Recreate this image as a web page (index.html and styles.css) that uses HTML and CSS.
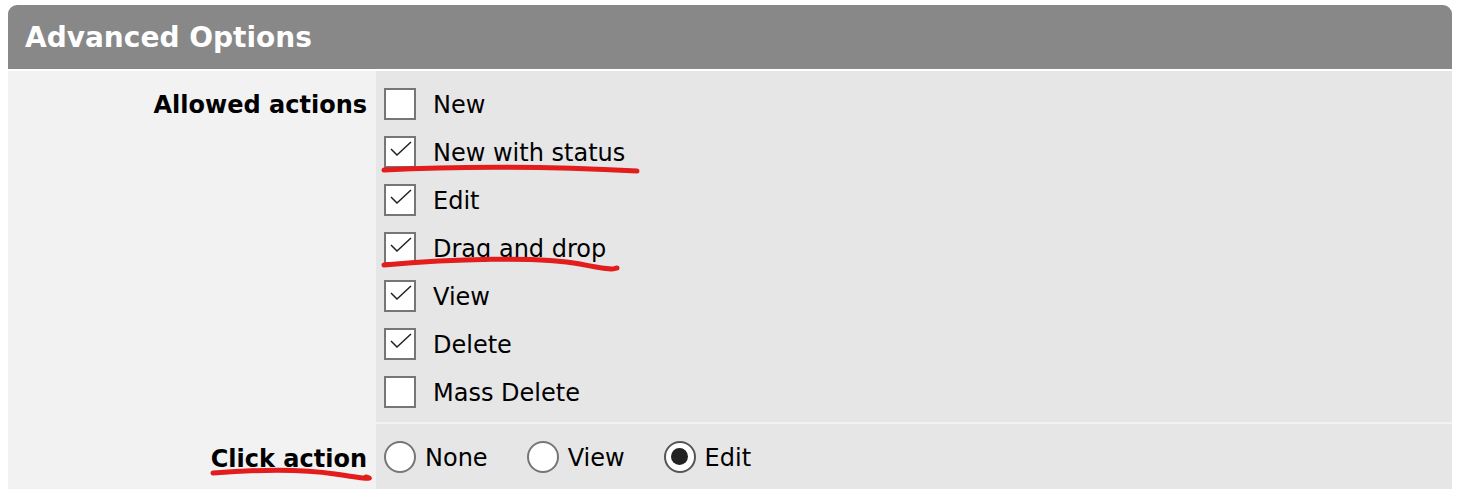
FILE: index.html
```html
<!DOCTYPE html>
<html lang="en">
<head>
<meta charset="utf-8">
<title>Advanced Options</title>
<link rel="stylesheet" href="styles.css">
</head>
<body>
<div class="panel">
  <div class="panel-header">Advanced Options</div>
  <div class="form">
    <div class="label label-top">Allowed actions</div>
    <div class="value checks">
      <div class="check"><span class="box"></span><span class="text">New</span></div>
      <div class="check"><span class="box"><svg viewBox="0 0 28 28" class="tick"><path d="M5 11 L11 17 L25 4"/></svg></span><span class="text">New with status</span></div>
      <div class="check"><span class="box"><svg viewBox="0 0 28 28" class="tick"><path d="M5 11 L11 17 L25 4"/></svg></span><span class="text">Edit</span></div>
      <div class="check"><span class="box"><svg viewBox="0 0 28 28" class="tick"><path d="M5 11 L11 17 L25 4"/></svg></span><span class="text">Drag and drop</span></div>
      <div class="check"><span class="box"><svg viewBox="0 0 28 28" class="tick"><path d="M5 11 L11 17 L25 4"/></svg></span><span class="text">View</span></div>
      <div class="check"><span class="box"><svg viewBox="0 0 28 28" class="tick"><path d="M5 11 L11 17 L25 4"/></svg></span><span class="text">Delete</span></div>
      <div class="check"><span class="box"></span><span class="text">Mass Delete</span></div>
    </div>
    <div class="label label-mid">Click action</div>
    <div class="value radios">
      <div class="radio"><span class="circle"></span><span class="text">None</span></div>
      <div class="radio"><span class="circle"></span><span class="text">View</span></div>
      <div class="radio"><span class="circle on"><span class="dot"></span></span><span class="text">Edit</span></div>
    </div>
  </div>
</div>
<svg class="marks" width="1458" height="490" viewBox="0 0 1458 490">
  <path d="M384 170 Q 500 164 637 171"/>
  <path d="M384 265 C 450 259, 540 256, 580 264 S 612 268 617 268"/>
  <path d="M213 473 Q 290 467 335 474 T 366 477"/>
</svg>
</body>
</html>
```
FILE: styles.css
```css
html, body {
  margin: 0;
  padding: 0;
  background: #ffffff;
}
body {
  padding: 5px 6px 0 8px;
  font-family: "DejaVu Sans", Verdana, sans-serif;
  color: #000;
  position: relative;
}
.panel {
  width: 1444px;
}
.panel-header {
  height: 64px;
  background: #888888;
  border-radius: 9px 9px 0 0;
  color: #fff;
  font-weight: bold;
  font-size: 28px;
  line-height: 66px;
  padding-left: 17px;
  margin-bottom: 2px;
}
.form {
  display: grid;
  grid-template-columns: 368px 1fr;
  row-gap: 2px;
  background: #f2f2f2;
}
.label {
  font-weight: bold;
  font-size: 24px;
  text-align: right;
  padding-right: 9px;
}
.label-top {
  padding-top: 10px;
  line-height: 48px;
}
.label-mid {
  align-self: center;
  line-height: 48px;
  padding-top: 5px;
}
.value {
  background: #e6e6e6;
  font-size: 24px;
}
.checks {
  padding: 9px 0 6px 8px;
}
.check {
  display: flex;
  align-items: center;
  height: 48px;
}
.box {
  width: 32px;
  height: 32px;
  box-sizing: border-box;
  border: 2px solid #767676;
  background: #fff;
  display: flex;
  align-items: center;
  justify-content: center;
}
.tick {
  width: 28px;
  height: 28px;
  fill: none;
  stroke: #222;
  stroke-width: 1.5;
}
.check .text {
  margin-left: 17px;
  padding-top: 2px;
}
.radios {
  height: 65px;
  display: flex;
  align-items: center;
  padding-left: 8px;
  gap: 39px;
}
.radio {
  display: flex;
  align-items: center;
}
.circle {
  width: 32px;
  height: 32px;
  box-sizing: border-box;
  border: 2px solid #767676;
  border-radius: 50%;
  background: #fff;
  display: flex;
  align-items: center;
  justify-content: center;
}
.circle.on {
  border-color: #555;
}
.dot {
  width: 17px;
  height: 17px;
  border-radius: 50%;
  background: #222;
}
.radio .text {
  margin-left: 9px;
  padding-top: 2px;
}
.marks {
  position: absolute;
  left: 0;
  top: 0;
  pointer-events: none;
}
.marks path {
  fill: none;
  stroke: #e31c1c;
  stroke-width: 5;
  stroke-linecap: round;
}
```
